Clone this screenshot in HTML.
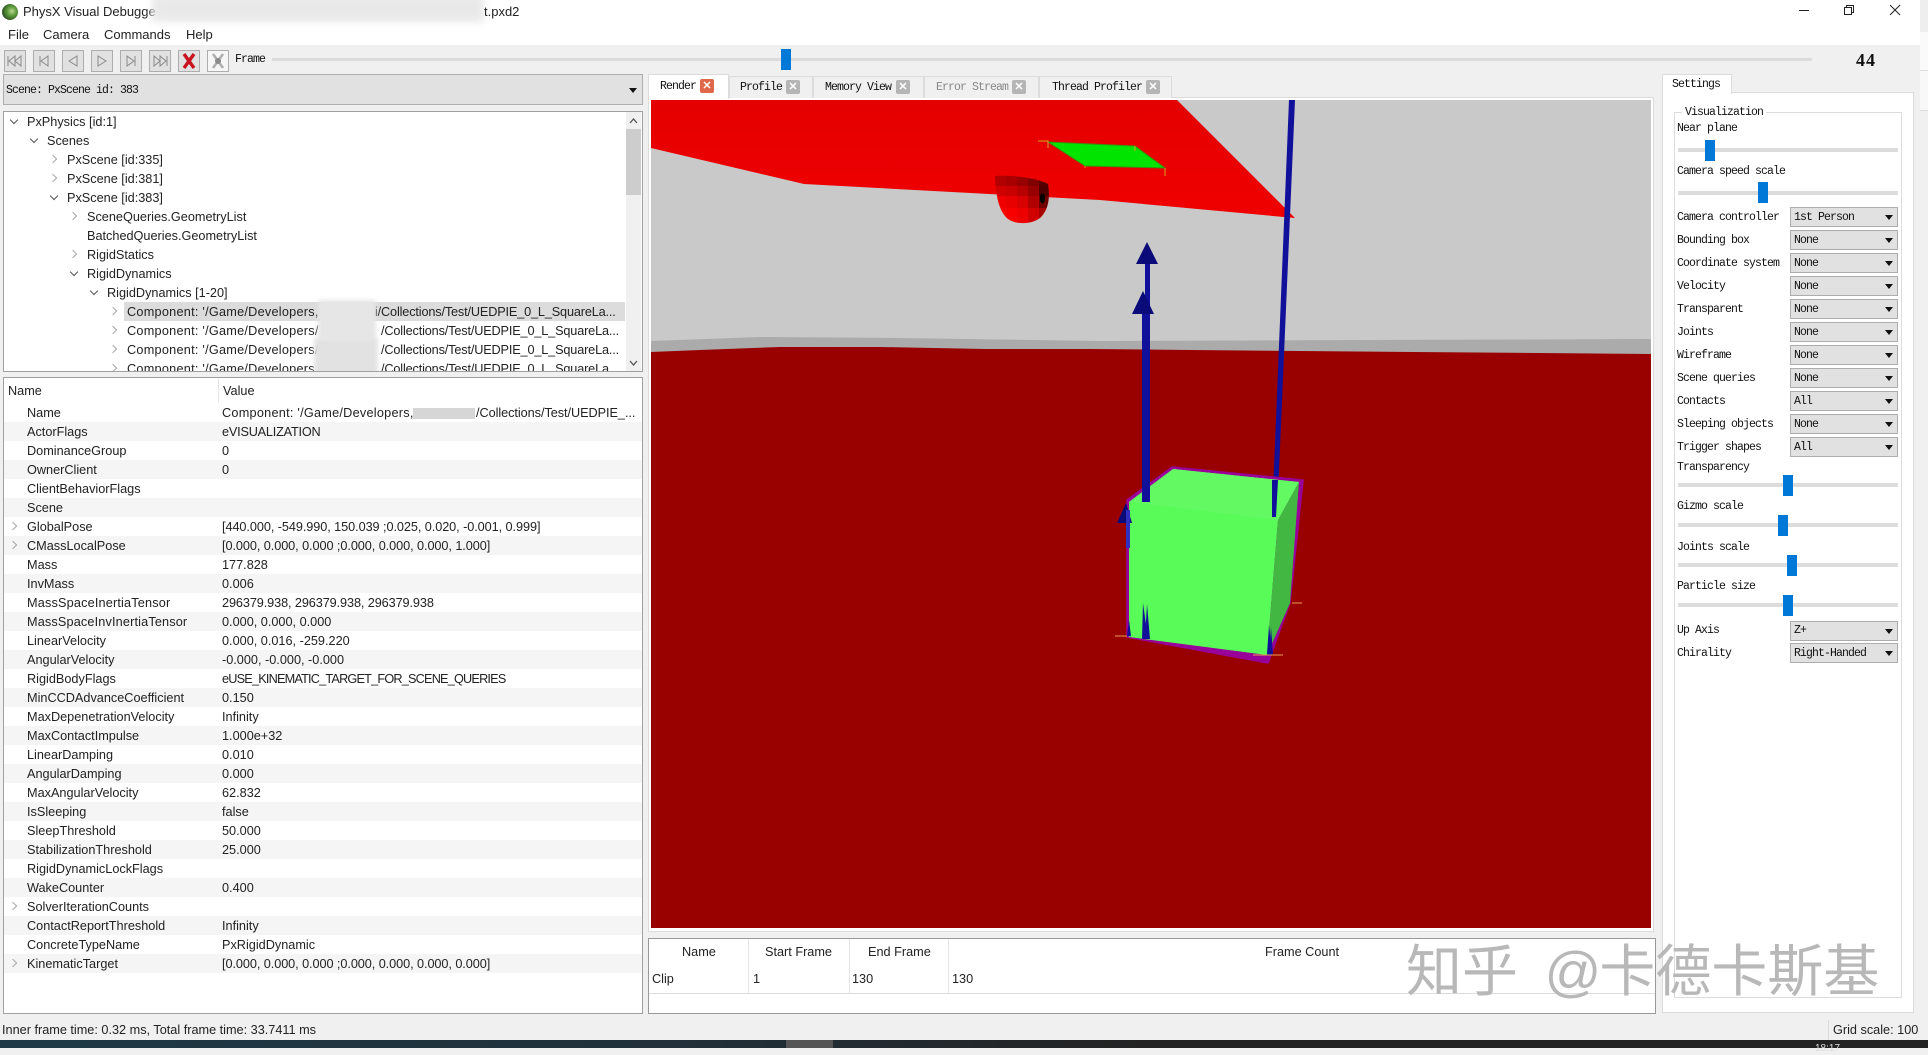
<!DOCTYPE html>
<html><head><meta charset="utf-8"><title>PhysX Visual Debugger</title>
<style>
html,body{margin:0;padding:0;width:1928px;height:1048px;overflow:hidden;background:#f0f0f0;font-family:"Liberation Sans","Noto Sans CJK SC",sans-serif;font-size:13px;color:#222}
div,span,svg{position:absolute;display:block}
.t{white-space:nowrap;line-height:20px;height:20px;font-size:12.7px}
.m{white-space:nowrap;line-height:20px;height:20px;margin-top:1px;font-family:"Liberation Mono",monospace;font-size:11.5px;letter-spacing:-.9px;color:#111}
.b{left:0;width:20px;height:20px;background:#e1e1e1;border:1px solid #adadad;box-sizing:content-box}
.r{transform:rotate(-45deg);width:5px;height:5px;border-right:1.4px solid #a8a8a8;border-bottom:1.4px solid #a8a8a8}
.d{transform:rotate(45deg);width:5px;height:5px;border-right:1.4px solid #555;border-bottom:1.4px solid #555}
.tab{top:76px;height:22px;background:#f0f0f0;border:1px solid #dcdcdc;border-bottom:0;box-sizing:border-box}
.x{width:14px;height:14px;background:#b5b5b5;border-radius:2px;color:#fff;font:bold 11px/14px "Liberation Sans",sans-serif;text-align:center}
.c{left:1790px;width:108px;height:20px;background:#e1e1e1;border:1px solid #adadad;box-sizing:border-box}
.c i{position:absolute;right:4px;top:7px;width:0;height:0;border-left:4px solid transparent;border-right:4px solid transparent;border-top:5px solid #111}
.tr{left:1678px;width:220px;height:4px;background:#dcdcdc}
.h{width:10px;height:21px;background:#0078d7}
.band{left:4px;width:638px;height:19px;background:#f5f5f5}
.c1{letter-spacing:.25px}
.c2{letter-spacing:-.15px}
</style></head><body>
<!-- title bar -->
<div style="left:0;top:0;width:1920px;height:45px;background:#fff"></div>
<div style="left:1920px;top:0;width:8px;height:32px;background:#eee"></div>
<div style="left:1920px;top:32px;width:8px;height:38px;background:#fafafa"></div>
<div style="left:1920px;top:70px;width:8px;height:40px;background:#f8f8f8;border-top:1px solid #ddd"></div>
<div style="left:1920px;top:110px;width:8px;height:930px;background:#f0f0f0;border-top:1px solid #ddd"></div>
<div style="left:2px;top:4px;width:16px;height:16px;border-radius:50%;background:radial-gradient(circle at 62% 45%,#b8d890 0,#5c9a3a 35%,#27451f 80%,#111 100%)"></div>
<div class="t" style="left:23px;top:2px;font-size:13px">PhysX Visual Debugge</div>
<div style="left:152px;top:-6px;width:332px;height:28px;background:#e9e9e9;filter:blur(4px)"></div>
<div class="t" style="left:484px;top:2px;font-size:13px">t.pxd2</div>
<div style="left:1799px;top:10px;width:10px;height:1px;background:#222"></div>
<svg style="left:1843px;top:4px" width="12" height="12"><path d="M1.5 3.5h7v7h-7zM3.5 3.5v-2h7v7h-2" fill="none" stroke="#222"/></svg>
<svg style="left:1889px;top:4px" width="12" height="12"><path d="M1 1l10 10M11 1L1 11" fill="none" stroke="#222"/></svg>
<!-- menu -->
<div class="t" style="left:8px;top:25px;font-size:13px">File</div>
<div class="t" style="left:43px;top:25px;font-size:13px">Camera</div>
<div class="t" style="left:104px;top:25px;font-size:13px">Commands</div>
<div class="t" style="left:186px;top:25px;font-size:13px">Help</div>
<!-- toolbar -->
<div class="b" style="left:4px;top:50px"><svg width="20" height="20"><path d="M3 5v10M10 5l-6 5 6 5zM16 5l-6 5 6 5z" fill="none" stroke="#8a8a8a"/></svg></div>
<div class="b" style="left:33px;top:50px"><svg width="20" height="20"><path d="M6 5v10M14 5l-7 5 7 5z" fill="none" stroke="#8a8a8a"/></svg></div>
<div class="b" style="left:62px;top:50px"><svg width="20" height="20"><path d="M14 5l-8 5 8 5z" fill="none" stroke="#8a8a8a"/></svg></div>
<div class="b" style="left:91px;top:50px"><svg width="20" height="20"><path d="M6 5l8 5-8 5z" fill="none" stroke="#8a8a8a"/></svg></div>
<div class="b" style="left:120px;top:50px"><svg width="20" height="20"><path d="M14 5v10M6 5l7 5-7 5z" fill="none" stroke="#8a8a8a"/></svg></div>
<div class="b" style="left:149px;top:50px"><svg width="20" height="20"><path d="M17 5v10M4 5l6 5-6 5zM10 5l6 5-6 5z" fill="none" stroke="#8a8a8a"/></svg></div>
<div class="b" style="left:178px;top:50px"><svg width="20" height="20"><path d="M5 3l10 14M15 3L5 17" fill="none" stroke="#c8141e" stroke-width="3.4"/></svg></div>
<div class="b" style="left:207px;top:50px;background:#f6f6f6"><svg width="20" height="20"><path d="M5 3l10 14M15 3L5 17" fill="none" stroke="#b0b0b0" stroke-width="2.6"/><circle cx="10" cy="10" r="3" fill="#8a8a8a"/></svg></div>
<div class="m" style="left:235px;top:49px">Frame</div>
<div style="left:272px;top:58px;width:1540px;height:3px;background:#dcdcdc"></div>
<div class="h" style="left:781px;top:49px"></div>
<div style="left:1856px;top:49px;font:bold 18px/22px 'Liberation Serif',serif;color:#111;letter-spacing:1px">44</div>
<!-- scene combo -->
<div style="left:3px;top:74px;width:640px;height:31px;background:#e1e1e1;border:1px solid #adadad;box-sizing:border-box"></div>
<div class="m" style="left:6px;top:80px">Scene: PxScene id: 383</div>
<div style="left:629px;top:88px;width:0;height:0;border-left:4px solid transparent;border-right:4px solid transparent;border-top:5px solid #111"></div>
<!-- tree -->
<div style="left:3px;top:111px;width:640px;height:261px;background:#fff;border:1px solid #a0a0a0;box-sizing:border-box"></div>
<div style="left:4px;top:112px;width:638px;height:259px;overflow:hidden">
<div style="left:120px;top:190px;width:501px;height:19px;background:#dcdcdc"></div>
<div class="d" style="left:7px;top:5px"></div><div class="t" style="left:23px;top:0">PxPhysics [id:1]</div>
<div class="d" style="left:27px;top:24px"></div><div class="t" style="left:43px;top:19px">Scenes</div>
<div class="r" style="left:46px;top:44px"></div><div class="t" style="left:63px;top:38px">PxScene [id:335]</div>
<div class="r" style="left:46px;top:63px"></div><div class="t" style="left:63px;top:57px">PxScene [id:381]</div>
<div class="d" style="left:47px;top:81px"></div><div class="t" style="left:63px;top:76px">PxScene [id:383]</div>
<div class="r" style="left:66px;top:101px"></div><div class="t" style="left:83px;top:95px">SceneQueries.GeometryList</div>
<div class="t" style="left:83px;top:114px">BatchedQueries.GeometryList</div>
<div class="r" style="left:66px;top:139px"></div><div class="t" style="left:83px;top:133px">RigidStatics</div>
<div class="d" style="left:67px;top:157px"></div><div class="t" style="left:83px;top:152px">RigidDynamics</div>
<div class="d" style="left:87px;top:176px"></div><div class="t" style="left:103px;top:171px">RigidDynamics [1-20]</div>
<div class="r" style="left:106px;top:196px"></div><div class="t c1" style="left:123px;top:190px">Component: '/Game/Developers,</div><div class="t c2" style="left:371px;top:190px">i/Collections/Test/UEDPIE_0_L_SquareLa...</div>
<div class="r" style="left:106px;top:215px"></div><div class="t c1" style="left:123px;top:209px">Component: '/Game/Developers/</div><div class="t c2" style="left:377px;top:209px">/Collections/Test/UEDPIE_0_L_SquareLa...</div>
<div class="r" style="left:106px;top:234px"></div><div class="t c1" style="left:123px;top:228px">Component: '/Game/Developers/</div><div class="t c2" style="left:377px;top:228px">/Collections/Test/UEDPIE_0_L_SquareLa...</div>
<div class="r" style="left:106px;top:253px"></div><div class="t c1" style="left:123px;top:247px">Component: '/Game/Developers,</div><div class="t c2" style="left:377px;top:247px">/Collections/Test/UEDPIE_0_L_SquareLa...</div>
<div style="left:314px;top:188px;width:58px;height:40px;background:#e6e6e6;filter:blur(2px)"></div>
<div style="left:310px;top:226px;width:64px;height:36px;background:#e2e2e2;filter:blur(2px)"></div>
</div>
<div style="left:626px;top:112px;width:15px;height:259px;background:#f0f0f0"></div>
<div style="left:626px;top:129px;width:15px;height:66px;background:#cdcdcd"></div>
<svg style="left:628px;top:117px" width="11" height="8"><path d="M2 6l3.5-4L9 6" fill="none" stroke="#555" stroke-width="1.3"/></svg>
<svg style="left:628px;top:359px" width="11" height="8"><path d="M2 2l3.5 4L9 2" fill="none" stroke="#555" stroke-width="1.3"/></svg>
<!-- property table -->
<div style="left:3px;top:377px;width:640px;height:637px;background:#fff;border:1px solid #a0a0a0;box-sizing:border-box"></div>
<div style="left:218px;top:378px;width:1px;height:24px;background:#e5e5e5"></div>
<div class="t" style="left:8px;top:381px">Name</div><div class="t" style="left:223px;top:381px">Value</div>
<div class="band" style="top:422px"></div><div class="band" style="top:460px"></div><div class="band" style="top:498px"></div><div class="band" style="top:536px"></div><div class="band" style="top:574px"></div><div class="band" style="top:612px"></div><div class="band" style="top:650px"></div><div class="band" style="top:688px"></div><div class="band" style="top:726px"></div><div class="band" style="top:764px"></div><div class="band" style="top:802px"></div><div class="band" style="top:840px"></div><div class="band" style="top:878px"></div><div class="band" style="top:916px"></div><div class="band" style="top:954px"></div>
<div class="t" style="left:27px;top:403px">Name</div><div class="t c1" style="left:222px;top:403px">Component: '/Game/Developers,</div><div class="t" style="left:476px;top:403px;letter-spacing:-.05px">/Collections/Test/UEDPIE_...</div>
<div style="left:413px;top:408px;width:62px;height:11px;background:#d6d6d6"></div>
<div class="t" style="left:27px;top:422px">ActorFlags</div><div class="t" style="left:222px;top:422px;letter-spacing:-.2px">eVISUALIZATION</div>
<div class="t" style="left:27px;top:441px">DominanceGroup</div><div class="t" style="left:222px;top:441px">0</div>
<div class="t" style="left:27px;top:460px">OwnerClient</div><div class="t" style="left:222px;top:460px">0</div>
<div class="t" style="left:27px;top:479px">ClientBehaviorFlags</div>
<div class="t" style="left:27px;top:498px">Scene</div>
<div class="r" style="left:10px;top:523px"></div><div class="t" style="left:27px;top:517px">GlobalPose</div><div class="t" style="left:222px;top:517px;letter-spacing:-.07px">[440.000, -549.990, 150.039 ;0.025, 0.020, -0.001, 0.999]</div>
<div class="r" style="left:10px;top:542px"></div><div class="t" style="left:27px;top:536px">CMassLocalPose</div><div class="t" style="left:222px;top:536px;letter-spacing:-.07px">[0.000, 0.000, 0.000 ;0.000, 0.000, 0.000, 1.000]</div>
<div class="t" style="left:27px;top:555px">Mass</div><div class="t" style="left:222px;top:555px">177.828</div>
<div class="t" style="left:27px;top:574px">InvMass</div><div class="t" style="left:222px;top:574px">0.006</div>
<div class="t" style="left:27px;top:593px;letter-spacing:.17px">MassSpaceInertiaTensor</div><div class="t" style="left:222px;top:593px;letter-spacing:-.1px">296379.938, 296379.938, 296379.938</div>
<div class="t" style="left:27px;top:612px;letter-spacing:.15px">MassSpaceInvInertiaTensor</div><div class="t" style="left:222px;top:612px">0.000, 0.000, 0.000</div>
<div class="t" style="left:27px;top:631px">LinearVelocity</div><div class="t" style="left:222px;top:631px">0.000, 0.016, -259.220</div>
<div class="t" style="left:27px;top:650px">AngularVelocity</div><div class="t" style="left:222px;top:650px">-0.000, -0.000, -0.000</div>
<div class="t" style="left:27px;top:669px">RigidBodyFlags</div><div class="t" style="left:222px;top:669px;letter-spacing:-.8px">eUSE_KINEMATIC_TARGET_FOR_SCENE_QUERIES</div>
<div class="t" style="left:27px;top:688px">MinCCDAdvanceCoefficient</div><div class="t" style="left:222px;top:688px">0.150</div>
<div class="t" style="left:27px;top:707px">MaxDepenetrationVelocity</div><div class="t" style="left:222px;top:707px">Infinity</div>
<div class="t" style="left:27px;top:726px">MaxContactImpulse</div><div class="t" style="left:222px;top:726px">1.000e+32</div>
<div class="t" style="left:27px;top:745px">LinearDamping</div><div class="t" style="left:222px;top:745px">0.010</div>
<div class="t" style="left:27px;top:764px">AngularDamping</div><div class="t" style="left:222px;top:764px">0.000</div>
<div class="t" style="left:27px;top:783px">MaxAngularVelocity</div><div class="t" style="left:222px;top:783px">62.832</div>
<div class="t" style="left:27px;top:802px">IsSleeping</div><div class="t" style="left:222px;top:802px">false</div>
<div class="t" style="left:27px;top:821px">SleepThreshold</div><div class="t" style="left:222px;top:821px">50.000</div>
<div class="t" style="left:27px;top:840px">StabilizationThreshold</div><div class="t" style="left:222px;top:840px">25.000</div>
<div class="t" style="left:27px;top:859px">RigidDynamicLockFlags</div>
<div class="t" style="left:27px;top:878px">WakeCounter</div><div class="t" style="left:222px;top:878px">0.400</div>
<div class="r" style="left:10px;top:903px"></div><div class="t" style="left:27px;top:897px">SolverIterationCounts</div>
<div class="t" style="left:27px;top:916px">ContactReportThreshold</div><div class="t" style="left:222px;top:916px">Infinity</div>
<div class="t" style="left:27px;top:935px">ConcreteTypeName</div><div class="t" style="left:222px;top:935px">PxRigidDynamic</div>
<div class="r" style="left:10px;top:960px"></div><div class="t" style="left:27px;top:954px">KinematicTarget</div><div class="t" style="left:222px;top:954px;letter-spacing:-.07px">[0.000, 0.000, 0.000 ;0.000, 0.000, 0.000, 0.000]</div>
<!-- tabs -->
<div style="left:648px;top:97px;width:1006px;height:835px;background:#fff;border:1px solid #dcdcdc;box-sizing:border-box"></div>
<div style="left:648px;top:74px;width:81px;height:25px;background:#fff;border:1px solid #dcdcdc;border-bottom:0;box-sizing:border-box"></div>
<div class="m" style="left:660px;top:76px">Render</div>
<div class="x" style="left:700px;top:79px;background:#e0684a">✕</div>
<div class="tab" style="left:729px;width:84px"></div><div class="m" style="left:740px;top:77px">Profile</div><div class="x" style="left:786px;top:80px">✕</div>
<div class="tab" style="left:813px;width:111px"></div><div class="m" style="left:825px;top:77px">Memory View</div><div class="x" style="left:896px;top:80px">✕</div>
<div class="tab" style="left:924px;width:115px"></div><div class="m" style="left:936px;top:77px;color:#888">Error Stream</div><div class="x" style="left:1012px;top:80px">✕</div>
<div class="tab" style="left:1039px;width:133px"></div><div class="m" style="left:1052px;top:77px">Thread Profiler</div><div class="x" style="left:1146px;top:80px">✕</div>
<!-- 3D view -->
<svg style="left:651px;top:100px" width="1000" height="828" viewBox="651 100 1000 828">
<defs>
<clipPath id="dome"><path d="M995 176C1010 175 1035 177 1048 184 1050 196 1049 208 1042 216 1035 225 1012 226 1005 216 998 207 996 195 995 176z"/></clipPath>
<linearGradient id="pl" x1="0" y1="100" x2="0" y2="220" gradientUnits="userSpaceOnUse"><stop offset="0" stop-color="#e40000"/><stop offset="1" stop-color="#f00000"/></linearGradient>
</defs>
<rect x="651" y="100" width="1000" height="828" fill="#c9c9c9"/>
<path d="M651 341L760 337 900 338 1100 341 1652 339V360H651z" fill="#ababab"/>
<path d="M651 352L700 350 780 347 880 347 985 349 1090 349 1190 350 1300 351 1652 354V928H651z" fill="#990000"/>
<path d="M651 100H1177L1295 218 1100 200 804 184 651 148z" fill="url(#pl)"/>
<path d="M1048 142L1135 146 1165 168 1085 166z" fill="#00e400" stroke="#3f8a10" stroke-width="1"/>
<path d="M1038 141H1048V148M1135 146v5M1085 166v2M1165 168v8" fill="none" stroke="#d8a020" stroke-width="1"/>
<g clip-path="url(#dome)">
<rect x="995" y="174" width="11" height="12" fill="#b00000"/><rect x="1006" y="174" width="11" height="12" fill="#a80000"/><rect x="1017" y="174" width="11" height="12" fill="#980000"/><rect x="1028" y="174" width="11" height="12" fill="#800000"/><rect x="1039" y="174" width="11" height="12" fill="#580000"/>
<rect x="995" y="186" width="11" height="10" fill="#d00000"/><rect x="1006" y="186" width="11" height="10" fill="#c80000"/><rect x="1017" y="186" width="11" height="10" fill="#b80000"/><rect x="1028" y="186" width="11" height="10" fill="#980000"/><rect x="1039" y="186" width="11" height="10" fill="#500000"/>
<rect x="995" y="196" width="11" height="12" fill="#f00000"/><rect x="1006" y="196" width="11" height="12" fill="#e80000"/><rect x="1017" y="196" width="11" height="12" fill="#d80000"/><rect x="1028" y="196" width="11" height="12" fill="#b00000"/><rect x="1039" y="196" width="11" height="12" fill="#700000"/>
<rect x="995" y="208" width="11" height="18" fill="#f80000"/><rect x="1006" y="208" width="11" height="18" fill="#f80000"/><rect x="1017" y="208" width="11" height="18" fill="#ee0000"/><rect x="1028" y="208" width="11" height="18" fill="#d00000"/><rect x="1039" y="208" width="11" height="18" fill="#a80000"/>
</g>
<ellipse cx="1042.5" cy="198.500" rx="2.600" ry="5" fill="#000"/>
<path d="M1145 264h5V500h-5z" fill="#10109a"/>
<path d="M1142 314h8V500h-8z" fill="#10109a"/>
<path d="M1147 242L1136 264H1158z" fill="#0a0a78"/>
<path d="M1143 291L1132 314H1154z" fill="#0a0a78"/>
<path d="M1289 100L1295 100 1277 517H1272z" fill="#10109a"/>
<!-- cube -->
<path d="M1127 500L1172 467 1303 480 1290 603 1268 663 1127 637z" fill="#990099" stroke="#990099" stroke-width="1.5"/>
<path d="M1129 502L1173 469 1299 482 1278 520 1267 655 1129 637z" fill="#58fb58"/>
<path d="M1129 502L1173 469 1299 482 1278 520z" fill="#62f962"/>
<path d="M1299 482L1278 520 1267 655 1290 603z" fill="#42b842"/>
<path d="M1142 430h8V502h-8z" fill="#10109a"/>
<path d="M1272 480h6L1276 517H1272z" fill="#10109a"/>
<path d="M1126 503L1117 523H1132z" fill="#0a0a78"/>
<path d="M1126 510h4V548h-4z" fill="#3030c0"/>
<path d="M1143 603L1142 639H1148zM1147 604L1145 639H1150zM1129 620L1127 636H1131zM1269 625L1267 655H1272zM1271 627L1269 655H1273z" fill="#10109a"/>
<path d="M1115 636h12M1253 655h30M1292 603h10" stroke="#e8a050" stroke-width="1" fill="none"/>
</svg>
<!-- clip table -->
<div style="left:648px;top:938px;width:1008px;height:76px;background:#fff;border:1px solid #9a9a9a;box-sizing:border-box"></div>
<div style="left:748px;top:939px;width:1px;height:54px;background:#e5e5e5"></div>
<div style="left:849px;top:939px;width:1px;height:54px;background:#e5e5e5"></div>
<div style="left:948px;top:939px;width:1px;height:54px;background:#e5e5e5"></div>
<div style="left:649px;top:993px;width:1006px;height:1px;background:#dcdcdc"></div>
<div class="t" style="left:682px;top:942px">Name</div>
<div class="t" style="left:765px;top:942px">Start Frame</div>
<div class="t" style="left:868px;top:942px">End Frame</div>
<div class="t" style="left:1265px;top:942px">Frame Count</div>
<div class="t" style="left:652px;top:969px">Clip</div>
<div class="t" style="left:753px;top:969px">1</div>
<div class="t" style="left:852px;top:969px">130</div>
<div class="t" style="left:952px;top:969px">130</div>
<!-- settings -->
<div style="left:1662px;top:92px;width:252px;height:921px;background:#fff;border:1px solid #dcdcdc;box-sizing:border-box"></div>
<div style="left:1662px;top:74px;width:70px;height:20px;background:#fff;border:1px solid #dcdcdc;border-bottom:0;box-sizing:border-box"></div>
<div class="m" style="left:1672px;top:74px">Settings</div>
<div style="left:1674px;top:112px;width:228px;height:886px;border:1px solid #dcdcdc;box-sizing:border-box"></div>
<div class="m" style="left:1682px;top:102px;background:#fff;padding:0 3px">Visualization</div>
<div class="m" style="left:1677px;top:118px">Near plane</div>
<div class="tr" style="top:148px"></div><div class="h" style="left:1705px;top:140px"></div>
<div class="m" style="left:1677px;top:161px">Camera speed scale</div>
<div class="tr" style="top:191px"></div><div class="h" style="left:1758px;top:182px"></div>
<div class="m" style="left:1677px;top:207px">Camera controller</div><div class="c" style="top:207px"><i></i></div><div class="m" style="left:1794px;top:207px">1st Person</div>
<div class="m" style="left:1677px;top:230px">Bounding box</div><div class="c" style="top:230px"><i></i></div><div class="m" style="left:1794px;top:230px">None</div>
<div class="m" style="left:1677px;top:253px">Coordinate system</div><div class="c" style="top:253px"><i></i></div><div class="m" style="left:1794px;top:253px">None</div>
<div class="m" style="left:1677px;top:276px">Velocity</div><div class="c" style="top:276px"><i></i></div><div class="m" style="left:1794px;top:276px">None</div>
<div class="m" style="left:1677px;top:299px">Transparent</div><div class="c" style="top:299px"><i></i></div><div class="m" style="left:1794px;top:299px">None</div>
<div class="m" style="left:1677px;top:322px">Joints</div><div class="c" style="top:322px"><i></i></div><div class="m" style="left:1794px;top:322px">None</div>
<div class="m" style="left:1677px;top:345px">Wireframe</div><div class="c" style="top:345px"><i></i></div><div class="m" style="left:1794px;top:345px">None</div>
<div class="m" style="left:1677px;top:368px">Scene queries</div><div class="c" style="top:368px"><i></i></div><div class="m" style="left:1794px;top:368px">None</div>
<div class="m" style="left:1677px;top:391px">Contacts</div><div class="c" style="top:391px"><i></i></div><div class="m" style="left:1794px;top:391px">All</div>
<div class="m" style="left:1677px;top:414px">Sleeping objects</div><div class="c" style="top:414px"><i></i></div><div class="m" style="left:1794px;top:414px">None</div>
<div class="m" style="left:1677px;top:437px">Trigger shapes</div><div class="c" style="top:437px"><i></i></div><div class="m" style="left:1794px;top:437px">All</div>
<div class="m" style="left:1677px;top:457px">Transparency</div>
<div class="tr" style="top:483px"></div><div class="h" style="left:1783px;top:475px"></div>
<div class="m" style="left:1677px;top:496px">Gizmo scale</div>
<div class="tr" style="top:523px"></div><div class="h" style="left:1778px;top:515px"></div>
<div class="m" style="left:1677px;top:537px">Joints scale</div>
<div class="tr" style="top:563px"></div><div class="h" style="left:1787px;top:555px"></div>
<div class="m" style="left:1677px;top:576px">Particle size</div>
<div class="tr" style="top:603px"></div><div class="h" style="left:1783px;top:595px"></div>
<div class="m" style="left:1677px;top:620px">Up Axis</div><div class="c" style="top:621px"><i></i></div><div class="m" style="left:1794px;top:620px">Z+</div>
<div class="m" style="left:1677px;top:643px">Chirality</div><div class="c" style="top:643px"><i></i></div><div class="m" style="left:1794px;top:643px">Right-Handed</div>
<!-- watermark -->
<div style="left:1406px;top:934px;white-space:nowrap;font:400 56px/68px 'Noto Sans CJK SC',sans-serif;color:#b8b8b8">知乎 <span style="position:static;display:inline;font-family:'Liberation Sans',sans-serif;margin-left:14px;margin-right:-2px">@</span>卡德卡斯基</div>
<!-- status -->
<div class="t" style="left:2px;top:1020px">Inner frame time: 0.32 ms, Total frame time: 33.7411 ms</div>
<div style="left:1828px;top:1020px;width:1px;height:20px;background:#dcdcdc"></div>
<div class="t" style="left:1833px;top:1020px">Grid scale: 100</div>
<div style="left:0;top:1040px;width:1928px;height:8px;background:linear-gradient(90deg,#1f3a46 0,#21303a 35%,#222 60%)"></div>
<div style="left:786px;top:1040px;width:47px;height:8px;background:#555"></div>
<div style="left:1815px;top:1043px;font:10px/12px 'Liberation Sans',sans-serif;color:#ddd">18:17</div>
</body></html>
